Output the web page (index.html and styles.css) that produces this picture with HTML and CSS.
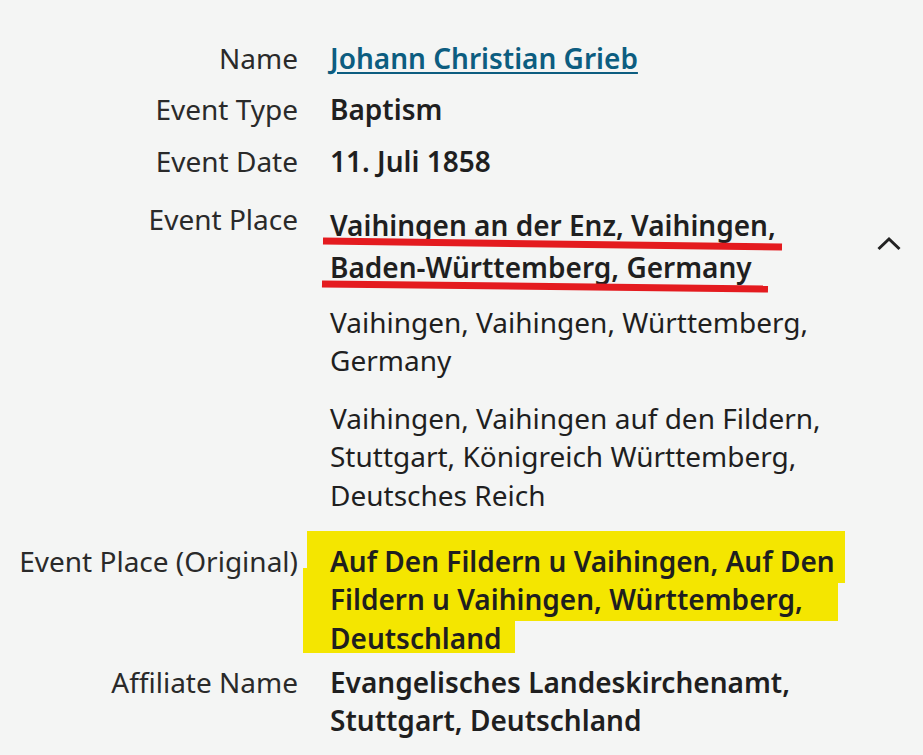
FILE: index.html
```html
<!DOCTYPE html>
<html lang="en">
<head>
<meta charset="utf-8">
<title>Record</title>
<link rel="stylesheet" href="styles.css">
</head>
<body>
<svg class="marks-under" width="923" height="755" viewBox="0 0 923 755" aria-hidden="true">
  <polygon fill="#f4e600" points="307,531 845,531 845,583 838,583 838,621 515,621 515,653 303,653 303,568 307,568"/>
</svg>
<main class="record">
  <div class="row row-name">
    <div class="label">Name</div>
    <div class="value"><a class="link" href="#">Johann Christian Grieb</a></div>
  </div>
  <div class="row">
    <div class="label">Event Type</div>
    <div class="value strong">Baptism</div>
  </div>
  <div class="row">
    <div class="label">Event Date</div>
    <div class="value strong">11. Juli 1858</div>
  </div>
  <div class="row row-place">
    <div class="label">Event Place</div>
    <div class="value">
      <div class="place-head">
        <div class="text primary strong">Vaihingen an der Enz, Vaihingen, Baden-Württemberg, Germany</div>
        <button class="toggle" type="button" aria-label="Collapse">
          <svg width="24" height="24" viewBox="0 0 24 24"><path d="M1.5 17 L12 7 L22.5 17" fill="none" stroke="#222" stroke-width="3"/></svg>
        </button>
      </div>
      <div class="text alt alt-1">Vaihingen, Vaihingen, Württemberg, Germany</div>
      <div class="text alt alt-2">Vaihingen, Vaihingen auf den Fildern, Stuttgart, Königreich Württemberg, Deutsches Reich</div>
    </div>
  </div>
  <div class="row row-original">
    <div class="label">Event Place (Original)</div>
    <div class="value"><div class="text strong">Auf Den Fildern u Vaihingen, Auf Den Fildern u Vaihingen, Württemberg, Deutschland</div></div>
  </div>
  <div class="row row-affiliate">
    <div class="label">Affiliate Name</div>
    <div class="value"><div class="text strong">Evangelisches Landeskirchenamt, Stuttgart, Deutschland</div></div>
  </div>
</main>
<svg class="marks-over" width="923" height="755" viewBox="0 0 923 755" aria-hidden="true">
  <line x1="323" y1="241" x2="782" y2="247" stroke="#e41b1f" stroke-width="7"/>
  <line x1="322" y1="284" x2="768" y2="289" stroke="#e41b1f" stroke-width="7"/>
</svg>
</body>
</html>
```
FILE: styles.css
```css
html, body {
  margin: 0;
  padding: 0;
}
body {
  background: #f4f5f4;
  font-family: "Noto Sans", "Open Sans", sans-serif;
  font-size: 28px;
  line-height: 38.4px;
  color: #2b2b2b;
  width: 923px;
  height: 755px;
  overflow: hidden;
  position: relative;
}
.marks-under {
  position: absolute;
  left: 0;
  top: 0;
  z-index: -1;
}
.marks-over {
  position: absolute;
  left: 0;
  top: 0;
  pointer-events: none;
}
.record {
  padding: 38.5px 22px 0 0;
  display: flex;
  flex-direction: column;
}
.row {
  display: grid;
  grid-template-columns: 298px 1fr;
  column-gap: 32px;
  margin-bottom: 14.3px;
}
.row-name {
  margin-bottom: 12.8px;
}
.label {
  text-align: right;
  color: #2a2a2a;
}
.value {
  color: #1f1f1f;
}
.text {
  max-width: 540px;
}
.strong {
  font-weight: 600;
}
.link {
  color: #0c5d80;
  font-weight: 600;
  text-decoration: underline;
  text-decoration-thickness: 2px;
  text-underline-offset: 3px;
}
.row-place {
  margin-top: 5.3px;
  margin-bottom: 27.5px;
}
.place-head {
  display: flex;
  align-items: flex-start;
  margin-top: 3.2px;
}
.primary {
  line-height: 42px;
  max-width: 480px;
}
.toggle {
  border: 0;
  background: none;
  padding: 0;
  width: 24px;
  height: 24px;
  margin-top: 28px;
  margin-left: auto;
  display: block;
  cursor: pointer;
}
.toggle svg {
  display: block;
}
.alt {
  font-weight: 400;
}
.alt-1 {
  margin-top: 15.4px;
}
.alt-2 {
  margin-top: 19.2px;
}
.row-original {
  margin-bottom: 5.8px;
}
```
